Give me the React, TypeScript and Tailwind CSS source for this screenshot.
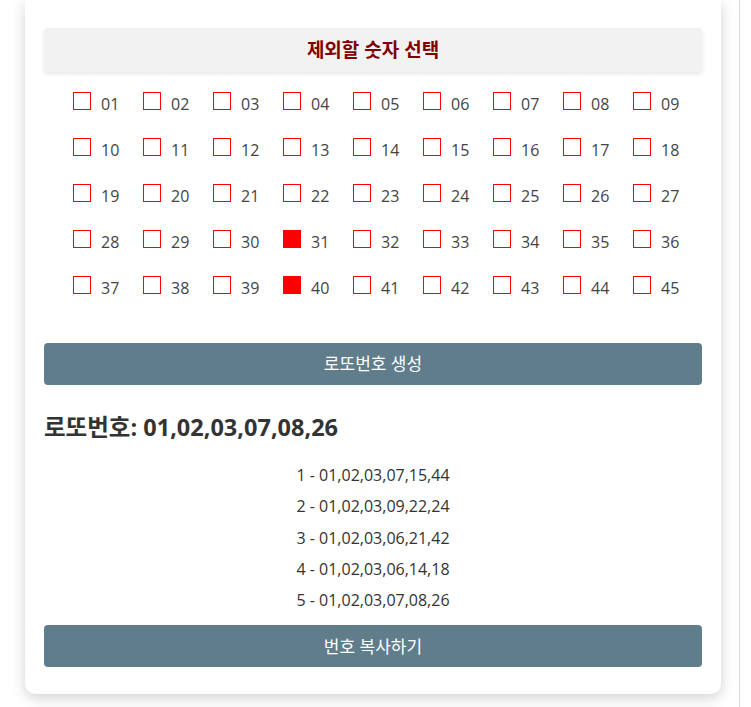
import React from "react";

const font = { fontFamily: '"Open Sans", "Noto Sans CJK KR", sans-serif' };

const checked = new Set([31, 40]);
const lines = [
  "1 - 01,02,03,07,15,44",
  "2 - 01,02,03,09,22,24",
  "3 - 01,02,03,06,21,42",
  "4 - 01,02,03,06,14,18",
  "5 - 01,02,03,07,08,26",
];

export default function App() {
  const nums = Array.from({ length: 45 }, (_, i) => i + 1);
  return (
    <div
      className="flex h-[707px] w-[751px] overflow-hidden bg-white text-[#333]"
      style={font}
    >
      <div className="w-[25px] shrink-0" />
      <div className="flex h-[694px] w-[696px] shrink-0 flex-col rounded-b-[10px] bg-white px-[19px] pt-[28px] shadow-[0_4px_14px_rgba(0,0,0,0.18)]">
        <div className="flex h-[44px] items-center justify-center rounded-[4px] bg-[#f2f2f2] text-[19px] font-bold text-[#800000] shadow-[0_2px_4px_rgba(0,0,0,0.1)]">
          제외할 숫자 선택
        </div>
        <div className="mt-[20px] grid grid-cols-[repeat(9,70px)] gap-y-[22px] pl-[29px]">
          {nums.map((n) => (
            <label key={n} className="flex h-[24px] items-start gap-[10px]">
              <span
                className={
                  checked.has(n)
                    ? "h-[18px] w-[18px] bg-[#ff0000]"
                    : "h-[18px] w-[18px] border border-[#ff0000] bg-white"
                }
              />
              <span className="text-[16px] leading-[24px] text-[#444]">
                {String(n).padStart(2, "0")}
              </span>
            </label>
          ))}
        </div>
        <button className="mt-[43px] flex h-[42px] items-center justify-center rounded-[4px] bg-[#607d8b] text-[17px] text-white">
          로또번호 생성
        </button>
        <div className="mt-[26px] text-[23.5px] font-bold leading-[32px] text-[#333]">
          로또번호: 01,02,03,07,08,26
        </div>
        <div className="mt-[17px] flex flex-col items-center text-[16px] leading-[31.25px] text-[#333]">
          {lines.map((l) => (
            <div key={l}>{l}</div>
          ))}
        </div>
        <button className="mt-[9px] flex h-[42px] items-center justify-center rounded-[4px] bg-[#607d8b] text-[17px] text-white">
          번호 복사하기
        </button>
      </div>
      <div className="w-[18px] shrink-0" />
      <div className="w-px shrink-0 bg-[#dcdcdc]" />
    </div>
  );
}
